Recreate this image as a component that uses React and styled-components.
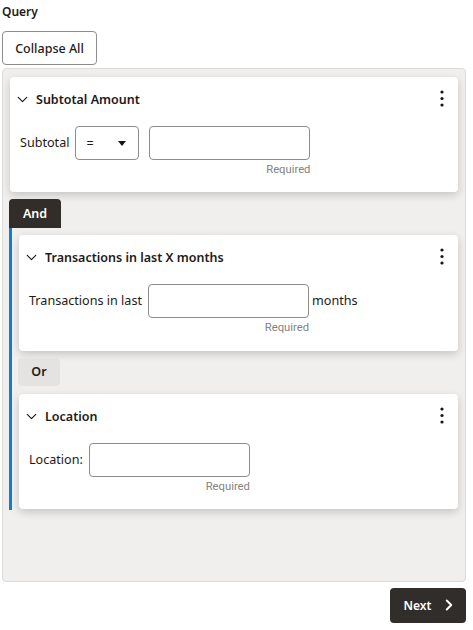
import React from "react";
import styled, { createGlobalStyle } from "styled-components";
import { ChevronDown, ChevronRight } from "lucide-react";

const GlobalStyle = createGlobalStyle`
  html, body {
    margin: 0;
    padding: 0;
    background: #fff;
    font-family: "Noto Sans", "Open Sans", sans-serif;
    color: #1f1a17;
  }
  * {
    box-sizing: border-box;
  }
`;

const Card = ({ title, tall, children }) => (
  <CardBox $tall={tall}>
    <CardHeader>
      <ChevronDown size={17} strokeWidth={1.6} color="#161513" />
      <CardTitle>{title}</CardTitle>
      <MenuButton aria-label="More">
        <svg width="4" height="18" viewBox="0 0 4 18">
          <circle cx="2" cy="2" r="1.6" fill="#161513" />
          <circle cx="2" cy="8.5" r="1.6" fill="#161513" />
          <circle cx="2" cy="15" r="1.6" fill="#161513" />
        </svg>
      </MenuButton>
    </CardHeader>
    <CardBody>{children}</CardBody>
  </CardBox>
);

const App = () => {
  return (
    <Page>
      <GlobalStyle />
      <Heading>Query</Heading>
      <CollapseButton>Collapse All</CollapseButton>
      <Panel>
        <Card title="Subtotal Amount">
          <Label>Subtotal</Label>
          <Select>
            <span>=</span>
            <Caret />
          </Select>
          <Field>
            <Input />
            <Hint>Required</Hint>
          </Field>
        </Card>
        <AndButton>And</AndButton>
        <Group>
          <Card title="Transactions in last X months" tall>
            <Label>Transactions in last</Label>
            <Field>
              <Input />
              <Hint>Required</Hint>
            </Field>
            <Suffix>months</Suffix>
          </Card>
          <OrButton>Or</OrButton>
          <Card title="Location">
            <Label>Location:</Label>
            <Field>
              <Input />
              <Hint>Required</Hint>
            </Field>
          </Card>
        </Group>
      </Panel>
      <Footer>
        <NextButton>
          <span>Next</span>
          <ChevronRight size={18} strokeWidth={2.6} color="#fff" />
        </NextButton>
      </Footer>
    </Page>
  );
};

export default App;

const Page = styled.div`
  width: 473px;
  height: 630px;
  padding: 5px 7px 0 2px;
  overflow: hidden;
`;

const Heading = styled.div`
  height: 14px;
  line-height: 14px;
  font-size: 12px;
  font-weight: 600;
`;

const CollapseButton = styled.button`
  display: block;
  width: 95px;
  height: 34px;
  margin-top: 12px;
  padding: 0;
  background: #fff;
  border: 1px solid #8f8c89;
  border-radius: 4px;
  font: 500 12.5px "Noto Sans", sans-serif;
  color: #1f1a17;
`;

const Panel = styled.div`
  height: 514px;
  margin-top: 3px;
  padding: 8px 7px 0 7px;
  background: #f0efed;
  border: 1px solid #dcdbd9;
  border-radius: 4px;
`;

const CardBox = styled.div`
  height: ${({ $tall }) => ($tall ? "116px" : "115px")};
  background: #fff;
  border-radius: 4px;
  box-shadow: 0 3px 8px rgba(0, 0, 0, 0.18);
`;

const CardHeader = styled.div`
  display: flex;
  align-items: center;
  height: 44px;
  padding: 0 4px 0 4px;
`;

const CardTitle = styled.div`
  margin-left: 5px;
  font-size: 12.5px;
  font-weight: 600;
  flex: 1;
`;

const MenuButton = styled.div`
  display: flex;
  width: 24px;
  height: 24px;
  align-items: center;
  justify-content: center;
`;

const CardBody = styled.div`
  display: flex;
  align-items: flex-start;
  gap: 6px;
  padding: 5px 10px 0 10px;
`;

const Label = styled.div`
  height: 34px;
  line-height: 33px;
  font-size: 12.6px;
  white-space: nowrap;
`;

const Suffix = styled(Label)`
  margin-left: -3px;
`;

const Select = styled.div`
  display: flex;
  align-items: center;
  justify-content: space-between;
  width: 64px;
  height: 34px;
  margin-right: 4px;
  padding: 0 12px 0 10px;
  border: 1px solid #8f8c89;
  border-radius: 4px;
  font-size: 12.5px;
`;

const Caret = styled.span`
  width: 0;
  height: 0;
  border-left: 4px solid transparent;
  border-right: 4px solid transparent;
  border-top: 5px solid #161513;
`;

const Field = styled.div`
  display: flex;
  flex-direction: column;
  align-items: flex-end;
  width: 161px;
`;

const Input = styled.div`
  width: 100%;
  height: 34px;
  background: #fff;
  border: 1px solid #8f8c89;
  border-radius: 4px;
`;

const Hint = styled.div`
  margin-top: 3px;
  font-family: Roboto, sans-serif;
  font-size: 11.25px;
  line-height: 14px;
  color: #858280;
`;

const AndButton = styled.div`
  width: 52px;
  height: 29px;
  margin: 7px 0 0 -1px;
  line-height: 29px;
  text-align: center;
  background: #312d2a;
  color: #fff;
  border-radius: 4px 4px 0 0;
  font-size: 12.5px;
  font-weight: 600;
`;

const Group = styled.div`
  height: 282px;
  margin-left: -1px;
  padding: 7px 0 0 7px;
  border-left: 3px solid #0f7fce;
`;

const OrButton = styled.div`
  width: 42px;
  height: 28px;
  margin: 7px 0 8px -1px;
  line-height: 28px;
  text-align: center;
  background: #e4e3e1;
  border-radius: 4px;
  font-size: 12.5px;
  font-weight: 600;
`;

const Footer = styled.div`
  display: flex;
  justify-content: flex-end;
  margin-top: 6px;
`;

const NextButton = styled.button`
  display: flex;
  align-items: center;
  justify-content: center;
  gap: 9px;
  width: 76px;
  height: 35px;
  padding: 0 0 1px 6px;
  background: #312d2a;
  color: #fff;
  border: none;
  border-radius: 4px;
  font: 600 12px "Noto Sans", sans-serif;
`;
